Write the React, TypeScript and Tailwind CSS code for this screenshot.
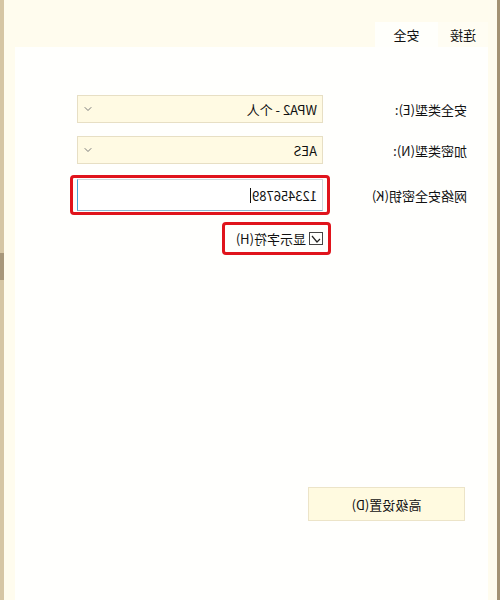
import React from 'react';
import { ChevronDown } from 'lucide-react';

const font = { fontFamily: '"Noto Sans CJK SC", "Noto Sans", sans-serif' };

function Select({ value }: { value: string }) {
  return (
    <div className="w-[246px] h-[28px] flex items-center justify-between pl-[5px] pr-[4px] bg-[#fffae3] border border-[#e7dfc4] text-[13px] text-[#111]">
      <span className="leading-none">{value}</span>
      <ChevronDown size={12} strokeWidth={2} className="text-[#7a7a7a]" />
    </div>
  );
}

export default function App() {
  return (
    <div className="w-[500px] h-[600px] overflow-hidden -scale-x-100" style={font}>
      <div className="w-full h-full flex bg-[#fffcee]">
        {/* outer frame, left */}
        <div className="w-[3px] bg-[#a39273]" />

        <div className="flex-1 flex flex-col pl-[9px] pr-[11px]">
          {/* tabs */}
          <div className="h-[47px] flex items-end">
            <div className="h-[25px] w-[50px] flex items-center justify-center bg-[#fffdf3] text-[13px] text-[#111] leading-none">
              连接
            </div>
            <div className="h-[25px] w-[63px] flex items-center justify-center bg-[#fffffb] text-[13px] text-[#111] leading-none">
              安全
            </div>
          </div>

          {/* tab page */}
          <div className="flex-1 flex flex-col bg-[#fffffd] pl-[21px] pt-[48px]">
            <div className="flex items-center">
              <div className="w-[144px] text-[13px] text-[#111] leading-none">安全类型(E):</div>
              <Select value="WPA2 - 个人" />
            </div>

            <div className="flex items-center mt-[13px]">
              <div className="w-[144px] text-[13px] text-[#111] leading-none">加密类型(N):</div>
              <Select value="AES" />
            </div>

            <div className="flex items-center mt-[15px]">
              <div className="w-[144px] text-[13px] text-[#111] leading-none">网络安全密钥(K)</div>
              <div className="relative">
                <div className="w-[246px] h-[32px] flex items-center pl-[5px] bg-white border border-[#cfd8dc] border-r-[#4aa6d8] border-b-[#8bb6cf] text-[13px] text-[#111]">
                  <span className="leading-none">123456789</span>
                  <span className="w-px h-[15px] bg-[#111] ml-px" />
                </div>
                <div className="absolute left-[-7px] top-[-4px] w-[260px] h-[40px] border-[3px] border-[#e0141c] rounded-[4px]" />
              </div>
            </div>

            <div className="flex pl-[144px] mt-[21px]">
              <div className="relative flex items-center gap-[3px] h-[13px]">
                <span className="w-[14px] h-[13px] border border-[#444] flex items-center justify-center">
                  <svg width="10" height="8" viewBox="0 0 10 8">
                    <path d="M1 4 L4 7 L9 1" fill="none" stroke="#222" strokeWidth="1.2" />
                  </svg>
                </span>
                <span className="text-[13px] text-[#111] leading-none">显示字符(H)</span>
                <div className="absolute left-[-8px] top-[-10px] w-[109px] h-[33px] border-[3px] border-[#e0141c] rounded-[4px]" />
              </div>
            </div>

            <div className="flex-1" />

            <div className="mb-[79px] ml-[2px]">
              <div className="w-[157px] h-[34px] flex items-center justify-center bg-[#fffae0] border border-[#ece4c8] text-[13px] text-[#111] leading-none">
                高级设置(D)
              </div>
            </div>
          </div>
        </div>

        {/* outer frame, right */}
        <div className="w-[4px] flex flex-col bg-[#d6c6a4]">
          <div className="h-[253px]" />
          <div className="h-[27px] bg-[#a8977a]" />
        </div>
      </div>
    </div>
  );
}
